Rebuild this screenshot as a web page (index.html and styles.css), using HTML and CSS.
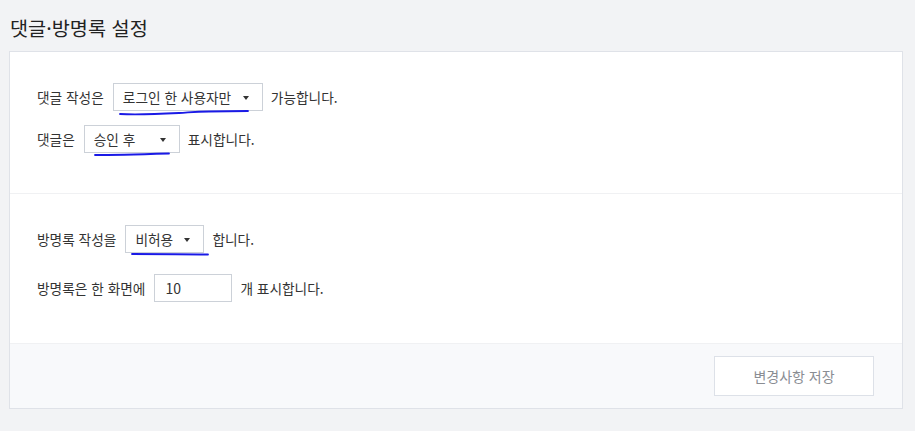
FILE: index.html
```html
<!DOCTYPE html>
<html lang="ko">
<head>
<meta charset="utf-8">
<link rel="stylesheet" href="styles.css">
</head>
<body>
<h2 class="title">댓글·방명록 설정</h2>
<div class="card">
  <section class="sec sec-first">
    <div class="row">
      <span>댓글 작성은</span>
      <span class="sel sel-a">로그인 한 사용자만<i class="caret"></i>
        <svg class="mark mark-a" viewBox="0 0 130 6"><path d="M1 4 C 20 5, 40 4, 60 3 C 70 2.5, 75 1.5, 90 1.5 C 105 1.2, 120 1, 129 1" /></svg>
      </span>
      <span>가능합니다.</span>
    </div>
    <div class="row row-2">
      <span>댓글은</span>
      <span class="sel sel-b">승인 후<i class="caret"></i>
        <svg class="mark mark-b" viewBox="0 0 76 4"><path d="M1 3 C 20 3, 40 2.5, 75 1.5" /></svg>
      </span>
      <span>표시합니다.</span>
    </div>
  </section>
  <section class="sec">
    <div class="row">
      <span>방명록 작성을</span>
      <span class="sel sel-c">비허용<i class="caret"></i>
        <svg class="mark mark-c" viewBox="0 0 78 4"><path d="M1 2 C 25 2, 50 2, 77 2.5" /></svg>
      </span>
      <span>합니다.</span>
    </div>
    <div class="row row-4">
      <span>방명록은 한 화면에</span>
      <span class="inp">10</span>
      <span>개 표시합니다.</span>
    </div>
  </section>
  <div class="footer">
    <button class="save">변경사항 저장</button>
  </div>
</div>
</body>
</html>
```
FILE: styles.css
```css
* { box-sizing: border-box; }
html, body {
  margin: 0;
  background: #f2f3f5;
  font-family: "Noto Sans CJK KR", "Noto Sans", sans-serif;
  color: #333;
}
body { padding: 0 12px 0 9px; }
.title {
  margin: 0;
  padding: 15px 0 0 1px;
  height: 51px;
  font-size: 19.7px;
  font-weight: 400;
  line-height: 26px;
  color: #222;
}
.card {
  background: #fff;
  border: 1px solid #dfe2e8;
  width: 894px;
}
.sec {
  padding: 31px 27px 41px;
  border-bottom: 1px solid #f0f1f3;
}
.sec-first { padding-bottom: 40px; }
.row {
  display: flex;
  align-items: center;
  height: 28px;
  font-size: 13.7px;
  line-height: 18px;
}
.row-2 { margin-top: 14px; }
.row-4 { margin-top: 21px; }
.sel, .inp {
  position: relative;
  display: inline-flex;
  align-items: center;
  height: 28px;
  border: 1px solid #ccd1d8;
  margin: 0 8px 0 9px;
  padding: 0 0 0 9px;
  font-size: 13.7px;
  color: #333;
  background: #fff;
}
.sel-a { width: 150px; }
.sel-b { width: 96px; }
.sel-c { width: 79px; }
.inp { width: 78px; padding-left: 10px; font-size: 14px; }
.caret {
  position: absolute;
  right: 13px;
  top: 12px;
  width: 0;
  height: 0;
  border-left: 3.5px solid transparent;
  border-right: 3.5px solid transparent;
  border-top: 4px solid #333;
}
.mark {
  position: absolute;
  overflow: visible;
  fill: none;
  stroke: #1a1ae6;
  stroke-width: 1.8;
  stroke-linecap: round;
}
.mark-a { left: 5px; top: 26px; width: 130px; height: 6px; }
.mark-b { left: 9px; top: 26px; width: 76px; height: 4px; }
.mark-c { left: 5px; top: 26px; width: 78px; height: 4px; }
.footer {
  background: #f8f9fb;
  height: 64px;
  display: flex;
  justify-content: flex-end;
  align-items: center;
  padding-right: 28px;
}
.save {
  width: 160px;
  height: 40px;
  background: #fff;
  border: 1px solid #dde1e8;
  font-family: "Noto Sans CJK KR", "Noto Sans", sans-serif;
  font-size: 14px;
  color: #8a8d93;
  padding: 0;
}
```
